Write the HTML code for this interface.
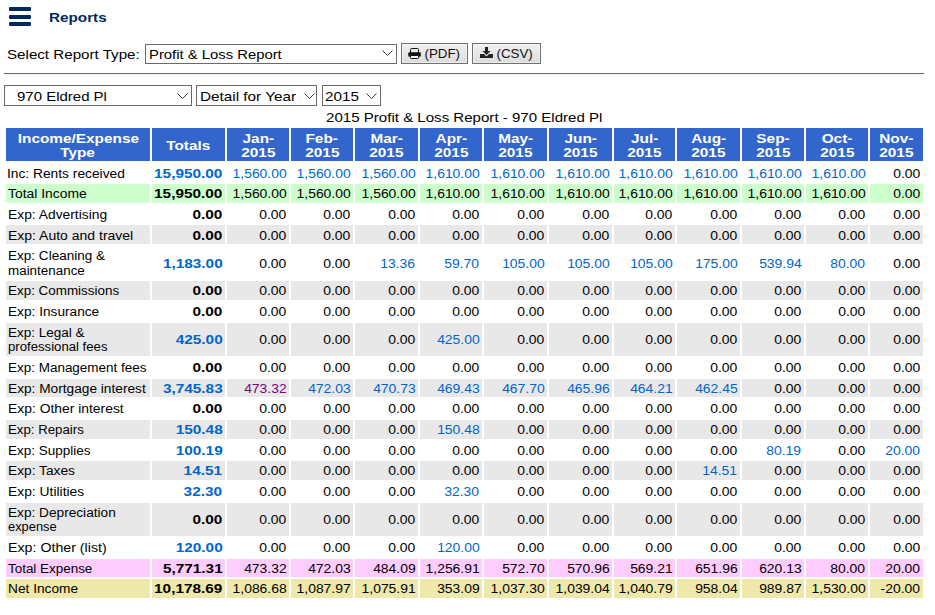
<!DOCTYPE html>
<html><head><meta charset="utf-8"><style>
html,body{margin:0;padding:0;background:#fff;width:935px;height:615px;overflow:hidden;position:relative}
*{box-sizing:border-box}
body{font-family:"Liberation Sans",sans-serif;color:#000}
.a{position:absolute}
.c{position:absolute;overflow:visible}
.t{position:absolute;white-space:nowrap;font-size:12px;line-height:14.667px}
.r{right:2.5px;transform-origin:100% 50%}
.l{left:1.5px;transform-origin:0 50%}
.n{display:inline-block;transform:scaleX(1.16);transform-origin:100% 0}
.b{display:inline-block;font-weight:bold;transform:scaleX(1.28);transform-origin:100% 0}
.h{background:#3366cc}
.ht{position:absolute;left:0;right:0;text-align:center;color:#fff;font-weight:bold;font-size:12px;line-height:14.667px;white-space:nowrap}
.ht span{display:inline-block;transform:scaleX(1.28);transform-origin:50% 50%}
.sel{position:absolute;border:1px solid #6a6a6a;background:#fff}
.chev{position:absolute}
.btn{position:absolute;border:1px solid #707070;box-shadow:inset 0 0 0 1px rgba(255,255,255,.45);background:linear-gradient(#f0f0f0,#dcdcdc);font-size:13px;line-height:19px;color:#222}
</style></head><body>

<div class="a" style="left:9px;top:7px;width:22px;height:4px;background:#002a5c;border-radius:1px"></div>
<div class="a" style="left:9px;top:15px;width:22px;height:4px;background:#002a5c;border-radius:1px"></div>
<div class="a" style="left:9px;top:22px;width:22px;height:4px;background:#002a5c;border-radius:1px"></div>
<div class="a" style="left:49px;top:10px;font-size:13px;line-height:16px;font-weight:bold;color:#002a5c;transform:scaleX(1.174);transform-origin:0 50%;white-space:nowrap">Reports</div>
<div class="a" style="left:7px;top:47px;font-size:13.33px;line-height:16px;white-space:nowrap;transform:scaleX(1.136);transform-origin:0 50%">Select Report Type:</div>
<div class="sel" style="left:145px;top:44px;width:252px;height:20px"></div>
<div class="a" style="left:149px;top:47px;font-size:13.33px;line-height:16px;white-space:nowrap;transform:scaleX(1.113);transform-origin:0 50%">Profit &amp; Loss Report</div>
<svg class="chev" style="left:381.5px;top:50px" width="12" height="7" viewBox="0 0 12 7"><path d="M0.5 0.5 L5.5 5.5 L10.5 0.5" fill="none" stroke="#3a3a3a" stroke-width="1"/></svg>
<div class="btn" style="left:401px;top:43px;width:67px;height:21px"></div>
<svg class="a" style="left:408px;top:48px" width="13" height="11" viewBox="0 0 13 11"><rect x="2.5" y="0.5" width="8" height="5" rx="1" fill="#e6e6e6" stroke="#111"/><rect x="0.3" y="4.2" width="12.5" height="4.6" rx="1" fill="#111"/><rect x="2.5" y="7.5" width="8" height="3" rx="0.8" fill="#f4f4f4" stroke="#111"/></svg>
<div class="a" style="left:424.5px;top:45.5px;font-size:13.33px;line-height:16px;color:#111;white-space:nowrap">(PDF)</div>
<div class="btn" style="left:472px;top:43px;width:69px;height:21px"></div>
<svg class="a" style="left:480px;top:47px" width="13" height="11" viewBox="0 0 13 11"><path d="M5 0h3v4h2.5l-4 4l-4-4h2.5z" fill="#222"/><path d="M0 7h4l2.5 2.5l2.5-2.5h4v4h-13z" fill="#222"/></svg>
<div class="a" style="left:496.5px;top:45.5px;font-size:13.33px;line-height:16px;color:#111;white-space:nowrap">(CSV)</div>
<div class="a" style="left:4px;top:73px;width:920px;height:1px;background:#6e6e6e"></div>
<div class="a" style="left:4px;top:74px;width:920px;height:1px;background:#f0f0f0"></div>
<div class="sel" style="left:4px;top:85px;width:188px;height:21px"></div>
<div class="a" style="left:17px;top:89px;font-size:13.33px;line-height:16px;white-space:nowrap;transform:scaleX(1.124);transform-origin:0 50%">970 Eldred Pl</div>
<svg class="chev" style="left:176.5px;top:92.5px" width="12" height="7" viewBox="0 0 12 7"><path d="M0.5 0.5 L5.5 5.5 L10.5 0.5" fill="none" stroke="#3a3a3a" stroke-width="1"/></svg>
<div class="sel" style="left:196px;top:85px;width:121px;height:21px"></div>
<div class="a" style="left:200px;top:89px;font-size:13.33px;line-height:16px;white-space:nowrap;transform:scaleX(1.147);transform-origin:0 50%">Detail for Year</div>
<svg class="chev" style="left:303.5px;top:92.5px" width="12" height="7" viewBox="0 0 12 7"><path d="M0.5 0.5 L5.5 5.5 L10.5 0.5" fill="none" stroke="#3a3a3a" stroke-width="1"/></svg>
<div class="sel" style="left:322px;top:85px;width:59px;height:21px"></div>
<div class="a" style="left:325px;top:89px;font-size:13.33px;line-height:16px;white-space:nowrap;transform:scaleX(1.142);transform-origin:0 50%">2015</div>
<svg class="chev" style="left:365.5px;top:92.5px" width="12" height="7" viewBox="0 0 12 7"><path d="M0.5 0.5 L5.5 5.5 L10.5 0.5" fill="none" stroke="#3a3a3a" stroke-width="1"/></svg>
<div class="a" style="left:0;width:929px;top:110px;text-align:center;font-size:13.33px;line-height:16px;white-space:nowrap"><span style="display:inline-block;transform:scaleX(1.13)">2015 Profit &amp; Loss Report - 970 Eldred Pl</span></div>
<div class="c h" style="left:6px;top:128.0px;width:144px;height:33.333px">
<div class="ht" style="top:4px"><span>Income/Expense</span></div><div class="ht" style="top:17.667px"><span>Type</span></div>
</div>
<div class="c h" style="left:152px;top:128.0px;width:73px;height:33.333px">
<div class="ht" style="top:10.667px"><span>Totals</span></div>
</div>
<div class="c h" style="left:227px;top:128.0px;width:62px;height:33.333px">
<div class="ht" style="top:4px"><span>Jan-</span></div><div class="ht" style="top:17.667px"><span>2015</span></div>
</div>
<div class="c h" style="left:291px;top:128.0px;width:62px;height:33.333px">
<div class="ht" style="top:4px"><span>Feb-</span></div><div class="ht" style="top:17.667px"><span>2015</span></div>
</div>
<div class="c h" style="left:355px;top:128.0px;width:63px;height:33.333px">
<div class="ht" style="top:4px"><span>Mar-</span></div><div class="ht" style="top:17.667px"><span>2015</span></div>
</div>
<div class="c h" style="left:420px;top:128.0px;width:62px;height:33.333px">
<div class="ht" style="top:4px"><span>Apr-</span></div><div class="ht" style="top:17.667px"><span>2015</span></div>
</div>
<div class="c h" style="left:484px;top:128.0px;width:63px;height:33.333px">
<div class="ht" style="top:4px"><span>May-</span></div><div class="ht" style="top:17.667px"><span>2015</span></div>
</div>
<div class="c h" style="left:549px;top:128.0px;width:63px;height:33.333px">
<div class="ht" style="top:4px"><span>Jun-</span></div><div class="ht" style="top:17.667px"><span>2015</span></div>
</div>
<div class="c h" style="left:614px;top:128.0px;width:61px;height:33.333px">
<div class="ht" style="top:4px"><span>Jul-</span></div><div class="ht" style="top:17.667px"><span>2015</span></div>
</div>
<div class="c h" style="left:677px;top:128.0px;width:63px;height:33.333px">
<div class="ht" style="top:4px"><span>Aug-</span></div><div class="ht" style="top:17.667px"><span>2015</span></div>
</div>
<div class="c h" style="left:742px;top:128.0px;width:62px;height:33.333px">
<div class="ht" style="top:4px"><span>Sep-</span></div><div class="ht" style="top:17.667px"><span>2015</span></div>
</div>
<div class="c h" style="left:806px;top:128.0px;width:62px;height:33.333px">
<div class="ht" style="top:4px"><span>Oct-</span></div><div class="ht" style="top:17.667px"><span>2015</span></div>
</div>
<div class="c h" style="left:870px;top:128.0px;width:53px;height:33.333px">
<div class="ht" style="top:4px"><span>Nov-</span></div><div class="ht" style="top:17.667px"><span>2015</span></div>
</div>
<div class="c" style="left:6px;top:163.333px;width:144px;height:18.667px"></div>
<div class="c" style="left:152px;top:163.333px;width:73px;height:18.667px"></div>
<div class="c" style="left:227px;top:163.333px;width:62px;height:18.667px"></div>
<div class="c" style="left:291px;top:163.333px;width:62px;height:18.667px"></div>
<div class="c" style="left:355px;top:163.333px;width:63px;height:18.667px"></div>
<div class="c" style="left:420px;top:163.333px;width:62px;height:18.667px"></div>
<div class="c" style="left:484px;top:163.333px;width:63px;height:18.667px"></div>
<div class="c" style="left:549px;top:163.333px;width:63px;height:18.667px"></div>
<div class="c" style="left:614px;top:163.333px;width:61px;height:18.667px"></div>
<div class="c" style="left:677px;top:163.333px;width:63px;height:18.667px"></div>
<div class="c" style="left:742px;top:163.333px;width:62px;height:18.667px"></div>
<div class="c" style="left:806px;top:163.333px;width:62px;height:18.667px"></div>
<div class="c" style="left:870px;top:163.333px;width:53px;height:18.667px"></div>
<div class="c" style="left:6px;top:184.000px;width:144px;height:18.667px;background:#ccffcc"></div>
<div class="c" style="left:152px;top:184.000px;width:73px;height:18.667px;background:#ccffcc"></div>
<div class="c" style="left:227px;top:184.000px;width:62px;height:18.667px;background:#ccffcc"></div>
<div class="c" style="left:291px;top:184.000px;width:62px;height:18.667px;background:#ccffcc"></div>
<div class="c" style="left:355px;top:184.000px;width:63px;height:18.667px;background:#ccffcc"></div>
<div class="c" style="left:420px;top:184.000px;width:62px;height:18.667px;background:#ccffcc"></div>
<div class="c" style="left:484px;top:184.000px;width:63px;height:18.667px;background:#ccffcc"></div>
<div class="c" style="left:549px;top:184.000px;width:63px;height:18.667px;background:#ccffcc"></div>
<div class="c" style="left:614px;top:184.000px;width:61px;height:18.667px;background:#ccffcc"></div>
<div class="c" style="left:677px;top:184.000px;width:63px;height:18.667px;background:#ccffcc"></div>
<div class="c" style="left:742px;top:184.000px;width:62px;height:18.667px;background:#ccffcc"></div>
<div class="c" style="left:806px;top:184.000px;width:62px;height:18.667px;background:#ccffcc"></div>
<div class="c" style="left:870px;top:184.000px;width:53px;height:18.667px;background:#ccffcc"></div>
<div class="c" style="left:6px;top:204.667px;width:144px;height:18.667px"></div>
<div class="c" style="left:152px;top:204.667px;width:73px;height:18.667px"></div>
<div class="c" style="left:227px;top:204.667px;width:62px;height:18.667px"></div>
<div class="c" style="left:291px;top:204.667px;width:62px;height:18.667px"></div>
<div class="c" style="left:355px;top:204.667px;width:63px;height:18.667px"></div>
<div class="c" style="left:420px;top:204.667px;width:62px;height:18.667px"></div>
<div class="c" style="left:484px;top:204.667px;width:63px;height:18.667px"></div>
<div class="c" style="left:549px;top:204.667px;width:63px;height:18.667px"></div>
<div class="c" style="left:614px;top:204.667px;width:61px;height:18.667px"></div>
<div class="c" style="left:677px;top:204.667px;width:63px;height:18.667px"></div>
<div class="c" style="left:742px;top:204.667px;width:62px;height:18.667px"></div>
<div class="c" style="left:806px;top:204.667px;width:62px;height:18.667px"></div>
<div class="c" style="left:870px;top:204.667px;width:53px;height:18.667px"></div>
<div class="c" style="left:6px;top:225.334px;width:144px;height:18.667px;background:#e8e8e8"></div>
<div class="c" style="left:152px;top:225.334px;width:73px;height:18.667px;background:#e8e8e8"></div>
<div class="c" style="left:227px;top:225.334px;width:62px;height:18.667px;background:#e8e8e8"></div>
<div class="c" style="left:291px;top:225.334px;width:62px;height:18.667px;background:#e8e8e8"></div>
<div class="c" style="left:355px;top:225.334px;width:63px;height:18.667px;background:#e8e8e8"></div>
<div class="c" style="left:420px;top:225.334px;width:62px;height:18.667px;background:#e8e8e8"></div>
<div class="c" style="left:484px;top:225.334px;width:63px;height:18.667px;background:#e8e8e8"></div>
<div class="c" style="left:549px;top:225.334px;width:63px;height:18.667px;background:#e8e8e8"></div>
<div class="c" style="left:614px;top:225.334px;width:61px;height:18.667px;background:#e8e8e8"></div>
<div class="c" style="left:677px;top:225.334px;width:63px;height:18.667px;background:#e8e8e8"></div>
<div class="c" style="left:742px;top:225.334px;width:62px;height:18.667px;background:#e8e8e8"></div>
<div class="c" style="left:806px;top:225.334px;width:62px;height:18.667px;background:#e8e8e8"></div>
<div class="c" style="left:870px;top:225.334px;width:53px;height:18.667px;background:#e8e8e8"></div>
<div class="c" style="left:6px;top:246.001px;width:144px;height:33.333px"></div>
<div class="c" style="left:152px;top:246.001px;width:73px;height:33.333px"></div>
<div class="c" style="left:227px;top:246.001px;width:62px;height:33.333px"></div>
<div class="c" style="left:291px;top:246.001px;width:62px;height:33.333px"></div>
<div class="c" style="left:355px;top:246.001px;width:63px;height:33.333px"></div>
<div class="c" style="left:420px;top:246.001px;width:62px;height:33.333px"></div>
<div class="c" style="left:484px;top:246.001px;width:63px;height:33.333px"></div>
<div class="c" style="left:549px;top:246.001px;width:63px;height:33.333px"></div>
<div class="c" style="left:614px;top:246.001px;width:61px;height:33.333px"></div>
<div class="c" style="left:677px;top:246.001px;width:63px;height:33.333px"></div>
<div class="c" style="left:742px;top:246.001px;width:62px;height:33.333px"></div>
<div class="c" style="left:806px;top:246.001px;width:62px;height:33.333px"></div>
<div class="c" style="left:870px;top:246.001px;width:53px;height:33.333px"></div>
<div class="c" style="left:6px;top:281.334px;width:144px;height:18.667px;background:#e8e8e8"></div>
<div class="c" style="left:152px;top:281.334px;width:73px;height:18.667px;background:#e8e8e8"></div>
<div class="c" style="left:227px;top:281.334px;width:62px;height:18.667px;background:#e8e8e8"></div>
<div class="c" style="left:291px;top:281.334px;width:62px;height:18.667px;background:#e8e8e8"></div>
<div class="c" style="left:355px;top:281.334px;width:63px;height:18.667px;background:#e8e8e8"></div>
<div class="c" style="left:420px;top:281.334px;width:62px;height:18.667px;background:#e8e8e8"></div>
<div class="c" style="left:484px;top:281.334px;width:63px;height:18.667px;background:#e8e8e8"></div>
<div class="c" style="left:549px;top:281.334px;width:63px;height:18.667px;background:#e8e8e8"></div>
<div class="c" style="left:614px;top:281.334px;width:61px;height:18.667px;background:#e8e8e8"></div>
<div class="c" style="left:677px;top:281.334px;width:63px;height:18.667px;background:#e8e8e8"></div>
<div class="c" style="left:742px;top:281.334px;width:62px;height:18.667px;background:#e8e8e8"></div>
<div class="c" style="left:806px;top:281.334px;width:62px;height:18.667px;background:#e8e8e8"></div>
<div class="c" style="left:870px;top:281.334px;width:53px;height:18.667px;background:#e8e8e8"></div>
<div class="c" style="left:6px;top:302.001px;width:144px;height:18.667px"></div>
<div class="c" style="left:152px;top:302.001px;width:73px;height:18.667px"></div>
<div class="c" style="left:227px;top:302.001px;width:62px;height:18.667px"></div>
<div class="c" style="left:291px;top:302.001px;width:62px;height:18.667px"></div>
<div class="c" style="left:355px;top:302.001px;width:63px;height:18.667px"></div>
<div class="c" style="left:420px;top:302.001px;width:62px;height:18.667px"></div>
<div class="c" style="left:484px;top:302.001px;width:63px;height:18.667px"></div>
<div class="c" style="left:549px;top:302.001px;width:63px;height:18.667px"></div>
<div class="c" style="left:614px;top:302.001px;width:61px;height:18.667px"></div>
<div class="c" style="left:677px;top:302.001px;width:63px;height:18.667px"></div>
<div class="c" style="left:742px;top:302.001px;width:62px;height:18.667px"></div>
<div class="c" style="left:806px;top:302.001px;width:62px;height:18.667px"></div>
<div class="c" style="left:870px;top:302.001px;width:53px;height:18.667px"></div>
<div class="c" style="left:6px;top:322.668px;width:144px;height:33.333px;background:#e8e8e8"></div>
<div class="c" style="left:152px;top:322.668px;width:73px;height:33.333px;background:#e8e8e8"></div>
<div class="c" style="left:227px;top:322.668px;width:62px;height:33.333px;background:#e8e8e8"></div>
<div class="c" style="left:291px;top:322.668px;width:62px;height:33.333px;background:#e8e8e8"></div>
<div class="c" style="left:355px;top:322.668px;width:63px;height:33.333px;background:#e8e8e8"></div>
<div class="c" style="left:420px;top:322.668px;width:62px;height:33.333px;background:#e8e8e8"></div>
<div class="c" style="left:484px;top:322.668px;width:63px;height:33.333px;background:#e8e8e8"></div>
<div class="c" style="left:549px;top:322.668px;width:63px;height:33.333px;background:#e8e8e8"></div>
<div class="c" style="left:614px;top:322.668px;width:61px;height:33.333px;background:#e8e8e8"></div>
<div class="c" style="left:677px;top:322.668px;width:63px;height:33.333px;background:#e8e8e8"></div>
<div class="c" style="left:742px;top:322.668px;width:62px;height:33.333px;background:#e8e8e8"></div>
<div class="c" style="left:806px;top:322.668px;width:62px;height:33.333px;background:#e8e8e8"></div>
<div class="c" style="left:870px;top:322.668px;width:53px;height:33.333px;background:#e8e8e8"></div>
<div class="c" style="left:6px;top:358.001px;width:144px;height:18.667px"></div>
<div class="c" style="left:152px;top:358.001px;width:73px;height:18.667px"></div>
<div class="c" style="left:227px;top:358.001px;width:62px;height:18.667px"></div>
<div class="c" style="left:291px;top:358.001px;width:62px;height:18.667px"></div>
<div class="c" style="left:355px;top:358.001px;width:63px;height:18.667px"></div>
<div class="c" style="left:420px;top:358.001px;width:62px;height:18.667px"></div>
<div class="c" style="left:484px;top:358.001px;width:63px;height:18.667px"></div>
<div class="c" style="left:549px;top:358.001px;width:63px;height:18.667px"></div>
<div class="c" style="left:614px;top:358.001px;width:61px;height:18.667px"></div>
<div class="c" style="left:677px;top:358.001px;width:63px;height:18.667px"></div>
<div class="c" style="left:742px;top:358.001px;width:62px;height:18.667px"></div>
<div class="c" style="left:806px;top:358.001px;width:62px;height:18.667px"></div>
<div class="c" style="left:870px;top:358.001px;width:53px;height:18.667px"></div>
<div class="c" style="left:6px;top:378.668px;width:144px;height:18.667px;background:#e8e8e8"></div>
<div class="c" style="left:152px;top:378.668px;width:73px;height:18.667px;background:#e8e8e8"></div>
<div class="c" style="left:227px;top:378.668px;width:62px;height:18.667px;background:#e8e8e8"></div>
<div class="c" style="left:291px;top:378.668px;width:62px;height:18.667px;background:#e8e8e8"></div>
<div class="c" style="left:355px;top:378.668px;width:63px;height:18.667px;background:#e8e8e8"></div>
<div class="c" style="left:420px;top:378.668px;width:62px;height:18.667px;background:#e8e8e8"></div>
<div class="c" style="left:484px;top:378.668px;width:63px;height:18.667px;background:#e8e8e8"></div>
<div class="c" style="left:549px;top:378.668px;width:63px;height:18.667px;background:#e8e8e8"></div>
<div class="c" style="left:614px;top:378.668px;width:61px;height:18.667px;background:#e8e8e8"></div>
<div class="c" style="left:677px;top:378.668px;width:63px;height:18.667px;background:#e8e8e8"></div>
<div class="c" style="left:742px;top:378.668px;width:62px;height:18.667px;background:#e8e8e8"></div>
<div class="c" style="left:806px;top:378.668px;width:62px;height:18.667px;background:#e8e8e8"></div>
<div class="c" style="left:870px;top:378.668px;width:53px;height:18.667px;background:#e8e8e8"></div>
<div class="c" style="left:6px;top:399.335px;width:144px;height:18.667px"></div>
<div class="c" style="left:152px;top:399.335px;width:73px;height:18.667px"></div>
<div class="c" style="left:227px;top:399.335px;width:62px;height:18.667px"></div>
<div class="c" style="left:291px;top:399.335px;width:62px;height:18.667px"></div>
<div class="c" style="left:355px;top:399.335px;width:63px;height:18.667px"></div>
<div class="c" style="left:420px;top:399.335px;width:62px;height:18.667px"></div>
<div class="c" style="left:484px;top:399.335px;width:63px;height:18.667px"></div>
<div class="c" style="left:549px;top:399.335px;width:63px;height:18.667px"></div>
<div class="c" style="left:614px;top:399.335px;width:61px;height:18.667px"></div>
<div class="c" style="left:677px;top:399.335px;width:63px;height:18.667px"></div>
<div class="c" style="left:742px;top:399.335px;width:62px;height:18.667px"></div>
<div class="c" style="left:806px;top:399.335px;width:62px;height:18.667px"></div>
<div class="c" style="left:870px;top:399.335px;width:53px;height:18.667px"></div>
<div class="c" style="left:6px;top:420.002px;width:144px;height:18.667px;background:#e8e8e8"></div>
<div class="c" style="left:152px;top:420.002px;width:73px;height:18.667px;background:#e8e8e8"></div>
<div class="c" style="left:227px;top:420.002px;width:62px;height:18.667px;background:#e8e8e8"></div>
<div class="c" style="left:291px;top:420.002px;width:62px;height:18.667px;background:#e8e8e8"></div>
<div class="c" style="left:355px;top:420.002px;width:63px;height:18.667px;background:#e8e8e8"></div>
<div class="c" style="left:420px;top:420.002px;width:62px;height:18.667px;background:#e8e8e8"></div>
<div class="c" style="left:484px;top:420.002px;width:63px;height:18.667px;background:#e8e8e8"></div>
<div class="c" style="left:549px;top:420.002px;width:63px;height:18.667px;background:#e8e8e8"></div>
<div class="c" style="left:614px;top:420.002px;width:61px;height:18.667px;background:#e8e8e8"></div>
<div class="c" style="left:677px;top:420.002px;width:63px;height:18.667px;background:#e8e8e8"></div>
<div class="c" style="left:742px;top:420.002px;width:62px;height:18.667px;background:#e8e8e8"></div>
<div class="c" style="left:806px;top:420.002px;width:62px;height:18.667px;background:#e8e8e8"></div>
<div class="c" style="left:870px;top:420.002px;width:53px;height:18.667px;background:#e8e8e8"></div>
<div class="c" style="left:6px;top:440.669px;width:144px;height:18.667px"></div>
<div class="c" style="left:152px;top:440.669px;width:73px;height:18.667px"></div>
<div class="c" style="left:227px;top:440.669px;width:62px;height:18.667px"></div>
<div class="c" style="left:291px;top:440.669px;width:62px;height:18.667px"></div>
<div class="c" style="left:355px;top:440.669px;width:63px;height:18.667px"></div>
<div class="c" style="left:420px;top:440.669px;width:62px;height:18.667px"></div>
<div class="c" style="left:484px;top:440.669px;width:63px;height:18.667px"></div>
<div class="c" style="left:549px;top:440.669px;width:63px;height:18.667px"></div>
<div class="c" style="left:614px;top:440.669px;width:61px;height:18.667px"></div>
<div class="c" style="left:677px;top:440.669px;width:63px;height:18.667px"></div>
<div class="c" style="left:742px;top:440.669px;width:62px;height:18.667px"></div>
<div class="c" style="left:806px;top:440.669px;width:62px;height:18.667px"></div>
<div class="c" style="left:870px;top:440.669px;width:53px;height:18.667px"></div>
<div class="c" style="left:6px;top:461.336px;width:144px;height:18.667px;background:#e8e8e8"></div>
<div class="c" style="left:152px;top:461.336px;width:73px;height:18.667px;background:#e8e8e8"></div>
<div class="c" style="left:227px;top:461.336px;width:62px;height:18.667px;background:#e8e8e8"></div>
<div class="c" style="left:291px;top:461.336px;width:62px;height:18.667px;background:#e8e8e8"></div>
<div class="c" style="left:355px;top:461.336px;width:63px;height:18.667px;background:#e8e8e8"></div>
<div class="c" style="left:420px;top:461.336px;width:62px;height:18.667px;background:#e8e8e8"></div>
<div class="c" style="left:484px;top:461.336px;width:63px;height:18.667px;background:#e8e8e8"></div>
<div class="c" style="left:549px;top:461.336px;width:63px;height:18.667px;background:#e8e8e8"></div>
<div class="c" style="left:614px;top:461.336px;width:61px;height:18.667px;background:#e8e8e8"></div>
<div class="c" style="left:677px;top:461.336px;width:63px;height:18.667px;background:#e8e8e8"></div>
<div class="c" style="left:742px;top:461.336px;width:62px;height:18.667px;background:#e8e8e8"></div>
<div class="c" style="left:806px;top:461.336px;width:62px;height:18.667px;background:#e8e8e8"></div>
<div class="c" style="left:870px;top:461.336px;width:53px;height:18.667px;background:#e8e8e8"></div>
<div class="c" style="left:6px;top:482.003px;width:144px;height:18.667px"></div>
<div class="c" style="left:152px;top:482.003px;width:73px;height:18.667px"></div>
<div class="c" style="left:227px;top:482.003px;width:62px;height:18.667px"></div>
<div class="c" style="left:291px;top:482.003px;width:62px;height:18.667px"></div>
<div class="c" style="left:355px;top:482.003px;width:63px;height:18.667px"></div>
<div class="c" style="left:420px;top:482.003px;width:62px;height:18.667px"></div>
<div class="c" style="left:484px;top:482.003px;width:63px;height:18.667px"></div>
<div class="c" style="left:549px;top:482.003px;width:63px;height:18.667px"></div>
<div class="c" style="left:614px;top:482.003px;width:61px;height:18.667px"></div>
<div class="c" style="left:677px;top:482.003px;width:63px;height:18.667px"></div>
<div class="c" style="left:742px;top:482.003px;width:62px;height:18.667px"></div>
<div class="c" style="left:806px;top:482.003px;width:62px;height:18.667px"></div>
<div class="c" style="left:870px;top:482.003px;width:53px;height:18.667px"></div>
<div class="c" style="left:6px;top:502.670px;width:144px;height:33.333px;background:#e8e8e8"></div>
<div class="c" style="left:152px;top:502.670px;width:73px;height:33.333px;background:#e8e8e8"></div>
<div class="c" style="left:227px;top:502.670px;width:62px;height:33.333px;background:#e8e8e8"></div>
<div class="c" style="left:291px;top:502.670px;width:62px;height:33.333px;background:#e8e8e8"></div>
<div class="c" style="left:355px;top:502.670px;width:63px;height:33.333px;background:#e8e8e8"></div>
<div class="c" style="left:420px;top:502.670px;width:62px;height:33.333px;background:#e8e8e8"></div>
<div class="c" style="left:484px;top:502.670px;width:63px;height:33.333px;background:#e8e8e8"></div>
<div class="c" style="left:549px;top:502.670px;width:63px;height:33.333px;background:#e8e8e8"></div>
<div class="c" style="left:614px;top:502.670px;width:61px;height:33.333px;background:#e8e8e8"></div>
<div class="c" style="left:677px;top:502.670px;width:63px;height:33.333px;background:#e8e8e8"></div>
<div class="c" style="left:742px;top:502.670px;width:62px;height:33.333px;background:#e8e8e8"></div>
<div class="c" style="left:806px;top:502.670px;width:62px;height:33.333px;background:#e8e8e8"></div>
<div class="c" style="left:870px;top:502.670px;width:53px;height:33.333px;background:#e8e8e8"></div>
<div class="c" style="left:6px;top:538.003px;width:144px;height:18.667px"></div>
<div class="c" style="left:152px;top:538.003px;width:73px;height:18.667px"></div>
<div class="c" style="left:227px;top:538.003px;width:62px;height:18.667px"></div>
<div class="c" style="left:291px;top:538.003px;width:62px;height:18.667px"></div>
<div class="c" style="left:355px;top:538.003px;width:63px;height:18.667px"></div>
<div class="c" style="left:420px;top:538.003px;width:62px;height:18.667px"></div>
<div class="c" style="left:484px;top:538.003px;width:63px;height:18.667px"></div>
<div class="c" style="left:549px;top:538.003px;width:63px;height:18.667px"></div>
<div class="c" style="left:614px;top:538.003px;width:61px;height:18.667px"></div>
<div class="c" style="left:677px;top:538.003px;width:63px;height:18.667px"></div>
<div class="c" style="left:742px;top:538.003px;width:62px;height:18.667px"></div>
<div class="c" style="left:806px;top:538.003px;width:62px;height:18.667px"></div>
<div class="c" style="left:870px;top:538.003px;width:53px;height:18.667px"></div>
<div class="c" style="left:6px;top:558.670px;width:144px;height:18.667px;background:#ffccff"></div>
<div class="c" style="left:152px;top:558.670px;width:73px;height:18.667px;background:#ffccff"></div>
<div class="c" style="left:227px;top:558.670px;width:62px;height:18.667px;background:#ffccff"></div>
<div class="c" style="left:291px;top:558.670px;width:62px;height:18.667px;background:#ffccff"></div>
<div class="c" style="left:355px;top:558.670px;width:63px;height:18.667px;background:#ffccff"></div>
<div class="c" style="left:420px;top:558.670px;width:62px;height:18.667px;background:#ffccff"></div>
<div class="c" style="left:484px;top:558.670px;width:63px;height:18.667px;background:#ffccff"></div>
<div class="c" style="left:549px;top:558.670px;width:63px;height:18.667px;background:#ffccff"></div>
<div class="c" style="left:614px;top:558.670px;width:61px;height:18.667px;background:#ffccff"></div>
<div class="c" style="left:677px;top:558.670px;width:63px;height:18.667px;background:#ffccff"></div>
<div class="c" style="left:742px;top:558.670px;width:62px;height:18.667px;background:#ffccff"></div>
<div class="c" style="left:806px;top:558.670px;width:62px;height:18.667px;background:#ffccff"></div>
<div class="c" style="left:870px;top:558.670px;width:53px;height:18.667px;background:#ffccff"></div>
<div class="c" style="left:6px;top:579.337px;width:144px;height:18.667px;background:#eee8aa"></div>
<div class="c" style="left:152px;top:579.337px;width:73px;height:18.667px;background:#eee8aa"></div>
<div class="c" style="left:227px;top:579.337px;width:62px;height:18.667px;background:#eee8aa"></div>
<div class="c" style="left:291px;top:579.337px;width:62px;height:18.667px;background:#eee8aa"></div>
<div class="c" style="left:355px;top:579.337px;width:63px;height:18.667px;background:#eee8aa"></div>
<div class="c" style="left:420px;top:579.337px;width:62px;height:18.667px;background:#eee8aa"></div>
<div class="c" style="left:484px;top:579.337px;width:63px;height:18.667px;background:#eee8aa"></div>
<div class="c" style="left:549px;top:579.337px;width:63px;height:18.667px;background:#eee8aa"></div>
<div class="c" style="left:614px;top:579.337px;width:61px;height:18.667px;background:#eee8aa"></div>
<div class="c" style="left:677px;top:579.337px;width:63px;height:18.667px;background:#eee8aa"></div>
<div class="c" style="left:742px;top:579.337px;width:62px;height:18.667px;background:#eee8aa"></div>
<div class="c" style="left:806px;top:579.337px;width:62px;height:18.667px;background:#eee8aa"></div>
<div class="c" style="left:870px;top:579.337px;width:53px;height:18.667px;background:#eee8aa"></div>
<div class="t" style="left:7.352px;top:167px;transform:scaleX(1.1475);transform-origin:0 0">Inc: Rents received</div>
<div class="t" style="left:152px;top:167px;width:70.5px;text-align:right;color:#0066cc"><span class="b">15,950.00</span></div>
<div class="t" style="left:227px;top:167px;width:59.5px;text-align:right;color:#0066cc"><span class="n">1,560.00</span></div>
<div class="t" style="left:291px;top:167px;width:59.5px;text-align:right;color:#0066cc"><span class="n">1,560.00</span></div>
<div class="t" style="left:355px;top:167px;width:60.5px;text-align:right;color:#0066cc"><span class="n">1,560.00</span></div>
<div class="t" style="left:420px;top:167px;width:59.5px;text-align:right;color:#0066cc"><span class="n">1,610.00</span></div>
<div class="t" style="left:484px;top:167px;width:60.5px;text-align:right;color:#0066cc"><span class="n">1,610.00</span></div>
<div class="t" style="left:549px;top:167px;width:60.5px;text-align:right;color:#0066cc"><span class="n">1,610.00</span></div>
<div class="t" style="left:614px;top:167px;width:58.5px;text-align:right;color:#0066cc"><span class="n">1,610.00</span></div>
<div class="t" style="left:677px;top:167px;width:60.5px;text-align:right;color:#0066cc"><span class="n">1,610.00</span></div>
<div class="t" style="left:742px;top:167px;width:59.5px;text-align:right;color:#0066cc"><span class="n">1,610.00</span></div>
<div class="t" style="left:806px;top:167px;width:59.5px;text-align:right;color:#0066cc"><span class="n">1,610.00</span></div>
<div class="t" style="left:870px;top:167px;width:50.5px;text-align:right;color:#000000"><span class="n">0.00</span></div>
<div class="t" style="left:7.7px;top:187px;transform:scaleX(1.1574);transform-origin:0 0">Total Income</div>
<div class="t" style="left:152px;top:187px;width:70.5px;text-align:right;color:#000000"><span class="b">15,950.00</span></div>
<div class="t" style="left:227px;top:187px;width:59.5px;text-align:right;color:#000000"><span class="n">1,560.00</span></div>
<div class="t" style="left:291px;top:187px;width:59.5px;text-align:right;color:#000000"><span class="n">1,560.00</span></div>
<div class="t" style="left:355px;top:187px;width:60.5px;text-align:right;color:#000000"><span class="n">1,560.00</span></div>
<div class="t" style="left:420px;top:187px;width:59.5px;text-align:right;color:#000000"><span class="n">1,610.00</span></div>
<div class="t" style="left:484px;top:187px;width:60.5px;text-align:right;color:#000000"><span class="n">1,610.00</span></div>
<div class="t" style="left:549px;top:187px;width:60.5px;text-align:right;color:#000000"><span class="n">1,610.00</span></div>
<div class="t" style="left:614px;top:187px;width:58.5px;text-align:right;color:#000000"><span class="n">1,610.00</span></div>
<div class="t" style="left:677px;top:187px;width:60.5px;text-align:right;color:#000000"><span class="n">1,610.00</span></div>
<div class="t" style="left:742px;top:187px;width:59.5px;text-align:right;color:#000000"><span class="n">1,610.00</span></div>
<div class="t" style="left:806px;top:187px;width:59.5px;text-align:right;color:#000000"><span class="n">1,610.00</span></div>
<div class="t" style="left:870px;top:187px;width:50.5px;text-align:right;color:#000000"><span class="n">0.00</span></div>
<div class="t" style="left:7.848px;top:208px;transform:scaleX(1.1518);transform-origin:0 0">Exp: Advertising</div>
<div class="t" style="left:152px;top:208px;width:70.5px;text-align:right;color:#000000"><span class="b">0.00</span></div>
<div class="t" style="left:227px;top:208px;width:59.5px;text-align:right;color:#000000"><span class="n">0.00</span></div>
<div class="t" style="left:291px;top:208px;width:59.5px;text-align:right;color:#000000"><span class="n">0.00</span></div>
<div class="t" style="left:355px;top:208px;width:60.5px;text-align:right;color:#000000"><span class="n">0.00</span></div>
<div class="t" style="left:420px;top:208px;width:59.5px;text-align:right;color:#000000"><span class="n">0.00</span></div>
<div class="t" style="left:484px;top:208px;width:60.5px;text-align:right;color:#000000"><span class="n">0.00</span></div>
<div class="t" style="left:549px;top:208px;width:60.5px;text-align:right;color:#000000"><span class="n">0.00</span></div>
<div class="t" style="left:614px;top:208px;width:58.5px;text-align:right;color:#000000"><span class="n">0.00</span></div>
<div class="t" style="left:677px;top:208px;width:60.5px;text-align:right;color:#000000"><span class="n">0.00</span></div>
<div class="t" style="left:742px;top:208px;width:59.5px;text-align:right;color:#000000"><span class="n">0.00</span></div>
<div class="t" style="left:806px;top:208px;width:59.5px;text-align:right;color:#000000"><span class="n">0.00</span></div>
<div class="t" style="left:870px;top:208px;width:50.5px;text-align:right;color:#000000"><span class="n">0.00</span></div>
<div class="t" style="left:7.834px;top:229px;transform:scaleX(1.166);transform-origin:0 0">Exp: Auto and travel</div>
<div class="t" style="left:152px;top:229px;width:70.5px;text-align:right;color:#000000"><span class="b">0.00</span></div>
<div class="t" style="left:227px;top:229px;width:59.5px;text-align:right;color:#000000"><span class="n">0.00</span></div>
<div class="t" style="left:291px;top:229px;width:59.5px;text-align:right;color:#000000"><span class="n">0.00</span></div>
<div class="t" style="left:355px;top:229px;width:60.5px;text-align:right;color:#000000"><span class="n">0.00</span></div>
<div class="t" style="left:420px;top:229px;width:59.5px;text-align:right;color:#000000"><span class="n">0.00</span></div>
<div class="t" style="left:484px;top:229px;width:60.5px;text-align:right;color:#000000"><span class="n">0.00</span></div>
<div class="t" style="left:549px;top:229px;width:60.5px;text-align:right;color:#000000"><span class="n">0.00</span></div>
<div class="t" style="left:614px;top:229px;width:58.5px;text-align:right;color:#000000"><span class="n">0.00</span></div>
<div class="t" style="left:677px;top:229px;width:60.5px;text-align:right;color:#000000"><span class="n">0.00</span></div>
<div class="t" style="left:742px;top:229px;width:59.5px;text-align:right;color:#000000"><span class="n">0.00</span></div>
<div class="t" style="left:806px;top:229px;width:59.5px;text-align:right;color:#000000"><span class="n">0.00</span></div>
<div class="t" style="left:870px;top:229px;width:50.5px;text-align:right;color:#000000"><span class="n">0.00</span></div>
<div class="t" style="left:7.872px;top:249px;transform:scaleX(1.1282);transform-origin:0 0">Exp: Cleaning &amp;</div>
<div class="t" style="left:7.882px;top:264px;transform:scaleX(1.1176);transform-origin:0 0">maintenance</div>
<div class="t" style="left:152px;top:257px;width:70.5px;text-align:right;color:#0066cc"><span class="b">1,183.00</span></div>
<div class="t" style="left:227px;top:257px;width:59.5px;text-align:right;color:#000000"><span class="n">0.00</span></div>
<div class="t" style="left:291px;top:257px;width:59.5px;text-align:right;color:#000000"><span class="n">0.00</span></div>
<div class="t" style="left:355px;top:257px;width:60.5px;text-align:right;color:#0066cc"><span class="n">13.36</span></div>
<div class="t" style="left:420px;top:257px;width:59.5px;text-align:right;color:#0066cc"><span class="n">59.70</span></div>
<div class="t" style="left:484px;top:257px;width:60.5px;text-align:right;color:#0066cc"><span class="n">105.00</span></div>
<div class="t" style="left:549px;top:257px;width:60.5px;text-align:right;color:#0066cc"><span class="n">105.00</span></div>
<div class="t" style="left:614px;top:257px;width:58.5px;text-align:right;color:#0066cc"><span class="n">105.00</span></div>
<div class="t" style="left:677px;top:257px;width:60.5px;text-align:right;color:#0066cc"><span class="n">175.00</span></div>
<div class="t" style="left:742px;top:257px;width:59.5px;text-align:right;color:#0066cc"><span class="n">539.94</span></div>
<div class="t" style="left:806px;top:257px;width:59.5px;text-align:right;color:#0066cc"><span class="n">80.00</span></div>
<div class="t" style="left:870px;top:257px;width:50.5px;text-align:right;color:#000000"><span class="n">0.00</span></div>
<div class="t" style="left:7.882px;top:284px;transform:scaleX(1.1184);transform-origin:0 0">Exp: Commissions</div>
<div class="t" style="left:152px;top:284px;width:70.5px;text-align:right;color:#000000"><span class="b">0.00</span></div>
<div class="t" style="left:227px;top:284px;width:59.5px;text-align:right;color:#000000"><span class="n">0.00</span></div>
<div class="t" style="left:291px;top:284px;width:59.5px;text-align:right;color:#000000"><span class="n">0.00</span></div>
<div class="t" style="left:355px;top:284px;width:60.5px;text-align:right;color:#000000"><span class="n">0.00</span></div>
<div class="t" style="left:420px;top:284px;width:59.5px;text-align:right;color:#000000"><span class="n">0.00</span></div>
<div class="t" style="left:484px;top:284px;width:60.5px;text-align:right;color:#000000"><span class="n">0.00</span></div>
<div class="t" style="left:549px;top:284px;width:60.5px;text-align:right;color:#000000"><span class="n">0.00</span></div>
<div class="t" style="left:614px;top:284px;width:58.5px;text-align:right;color:#000000"><span class="n">0.00</span></div>
<div class="t" style="left:677px;top:284px;width:60.5px;text-align:right;color:#000000"><span class="n">0.00</span></div>
<div class="t" style="left:742px;top:284px;width:59.5px;text-align:right;color:#000000"><span class="n">0.00</span></div>
<div class="t" style="left:806px;top:284px;width:59.5px;text-align:right;color:#000000"><span class="n">0.00</span></div>
<div class="t" style="left:870px;top:284px;width:50.5px;text-align:right;color:#000000"><span class="n">0.00</span></div>
<div class="t" style="left:7.861px;top:305px;transform:scaleX(1.1392);transform-origin:0 0">Exp: Insurance</div>
<div class="t" style="left:152px;top:305px;width:70.5px;text-align:right;color:#000000"><span class="b">0.00</span></div>
<div class="t" style="left:227px;top:305px;width:59.5px;text-align:right;color:#000000"><span class="n">0.00</span></div>
<div class="t" style="left:291px;top:305px;width:59.5px;text-align:right;color:#000000"><span class="n">0.00</span></div>
<div class="t" style="left:355px;top:305px;width:60.5px;text-align:right;color:#000000"><span class="n">0.00</span></div>
<div class="t" style="left:420px;top:305px;width:59.5px;text-align:right;color:#000000"><span class="n">0.00</span></div>
<div class="t" style="left:484px;top:305px;width:60.5px;text-align:right;color:#000000"><span class="n">0.00</span></div>
<div class="t" style="left:549px;top:305px;width:60.5px;text-align:right;color:#000000"><span class="n">0.00</span></div>
<div class="t" style="left:614px;top:305px;width:58.5px;text-align:right;color:#000000"><span class="n">0.00</span></div>
<div class="t" style="left:677px;top:305px;width:60.5px;text-align:right;color:#000000"><span class="n">0.00</span></div>
<div class="t" style="left:742px;top:305px;width:59.5px;text-align:right;color:#000000"><span class="n">0.00</span></div>
<div class="t" style="left:806px;top:305px;width:59.5px;text-align:right;color:#000000"><span class="n">0.00</span></div>
<div class="t" style="left:870px;top:305px;width:50.5px;text-align:right;color:#000000"><span class="n">0.00</span></div>
<div class="t" style="left:7.875px;top:326px;transform:scaleX(1.1254);transform-origin:0 0">Exp: Legal &amp;</div>
<div class="t" style="left:8.4px;top:340px;transform:scaleX(1.0967);transform-origin:0 0">professional fees</div>
<div class="t" style="left:152px;top:333px;width:70.5px;text-align:right;color:#0066cc"><span class="b">425.00</span></div>
<div class="t" style="left:227px;top:333px;width:59.5px;text-align:right;color:#000000"><span class="n">0.00</span></div>
<div class="t" style="left:291px;top:333px;width:59.5px;text-align:right;color:#000000"><span class="n">0.00</span></div>
<div class="t" style="left:355px;top:333px;width:60.5px;text-align:right;color:#000000"><span class="n">0.00</span></div>
<div class="t" style="left:420px;top:333px;width:59.5px;text-align:right;color:#0066cc"><span class="n">425.00</span></div>
<div class="t" style="left:484px;top:333px;width:60.5px;text-align:right;color:#000000"><span class="n">0.00</span></div>
<div class="t" style="left:549px;top:333px;width:60.5px;text-align:right;color:#000000"><span class="n">0.00</span></div>
<div class="t" style="left:614px;top:333px;width:58.5px;text-align:right;color:#000000"><span class="n">0.00</span></div>
<div class="t" style="left:677px;top:333px;width:60.5px;text-align:right;color:#000000"><span class="n">0.00</span></div>
<div class="t" style="left:742px;top:333px;width:59.5px;text-align:right;color:#000000"><span class="n">0.00</span></div>
<div class="t" style="left:806px;top:333px;width:59.5px;text-align:right;color:#000000"><span class="n">0.00</span></div>
<div class="t" style="left:870px;top:333px;width:50.5px;text-align:right;color:#000000"><span class="n">0.00</span></div>
<div class="t" style="left:7.878px;top:361px;transform:scaleX(1.1221);transform-origin:0 0">Exp: Management fees</div>
<div class="t" style="left:152px;top:361px;width:70.5px;text-align:right;color:#000000"><span class="b">0.00</span></div>
<div class="t" style="left:227px;top:361px;width:59.5px;text-align:right;color:#000000"><span class="n">0.00</span></div>
<div class="t" style="left:291px;top:361px;width:59.5px;text-align:right;color:#000000"><span class="n">0.00</span></div>
<div class="t" style="left:355px;top:361px;width:60.5px;text-align:right;color:#000000"><span class="n">0.00</span></div>
<div class="t" style="left:420px;top:361px;width:59.5px;text-align:right;color:#000000"><span class="n">0.00</span></div>
<div class="t" style="left:484px;top:361px;width:60.5px;text-align:right;color:#000000"><span class="n">0.00</span></div>
<div class="t" style="left:549px;top:361px;width:60.5px;text-align:right;color:#000000"><span class="n">0.00</span></div>
<div class="t" style="left:614px;top:361px;width:58.5px;text-align:right;color:#000000"><span class="n">0.00</span></div>
<div class="t" style="left:677px;top:361px;width:60.5px;text-align:right;color:#000000"><span class="n">0.00</span></div>
<div class="t" style="left:742px;top:361px;width:59.5px;text-align:right;color:#000000"><span class="n">0.00</span></div>
<div class="t" style="left:806px;top:361px;width:59.5px;text-align:right;color:#000000"><span class="n">0.00</span></div>
<div class="t" style="left:870px;top:361px;width:50.5px;text-align:right;color:#000000"><span class="n">0.00</span></div>
<div class="t" style="left:7.859px;top:382px;transform:scaleX(1.1408);transform-origin:0 0">Exp: Mortgage interest</div>
<div class="t" style="left:152px;top:382px;width:70.5px;text-align:right;color:#0066cc"><span class="b">3,745.83</span></div>
<div class="t" style="left:227px;top:382px;width:59.5px;text-align:right;color:#800080"><span class="n">473.32</span></div>
<div class="t" style="left:291px;top:382px;width:59.5px;text-align:right;color:#0066cc"><span class="n">472.03</span></div>
<div class="t" style="left:355px;top:382px;width:60.5px;text-align:right;color:#0066cc"><span class="n">470.73</span></div>
<div class="t" style="left:420px;top:382px;width:59.5px;text-align:right;color:#0066cc"><span class="n">469.43</span></div>
<div class="t" style="left:484px;top:382px;width:60.5px;text-align:right;color:#0066cc"><span class="n">467.70</span></div>
<div class="t" style="left:549px;top:382px;width:60.5px;text-align:right;color:#0066cc"><span class="n">465.96</span></div>
<div class="t" style="left:614px;top:382px;width:58.5px;text-align:right;color:#0066cc"><span class="n">464.21</span></div>
<div class="t" style="left:677px;top:382px;width:60.5px;text-align:right;color:#0066cc"><span class="n">462.45</span></div>
<div class="t" style="left:742px;top:382px;width:59.5px;text-align:right;color:#000000"><span class="n">0.00</span></div>
<div class="t" style="left:806px;top:382px;width:59.5px;text-align:right;color:#000000"><span class="n">0.00</span></div>
<div class="t" style="left:870px;top:382px;width:50.5px;text-align:right;color:#000000"><span class="n">0.00</span></div>
<div class="t" style="left:7.843px;top:402px;transform:scaleX(1.1566);transform-origin:0 0">Exp: Other interest</div>
<div class="t" style="left:152px;top:402px;width:70.5px;text-align:right;color:#000000"><span class="b">0.00</span></div>
<div class="t" style="left:227px;top:402px;width:59.5px;text-align:right;color:#000000"><span class="n">0.00</span></div>
<div class="t" style="left:291px;top:402px;width:59.5px;text-align:right;color:#000000"><span class="n">0.00</span></div>
<div class="t" style="left:355px;top:402px;width:60.5px;text-align:right;color:#000000"><span class="n">0.00</span></div>
<div class="t" style="left:420px;top:402px;width:59.5px;text-align:right;color:#000000"><span class="n">0.00</span></div>
<div class="t" style="left:484px;top:402px;width:60.5px;text-align:right;color:#000000"><span class="n">0.00</span></div>
<div class="t" style="left:549px;top:402px;width:60.5px;text-align:right;color:#000000"><span class="n">0.00</span></div>
<div class="t" style="left:614px;top:402px;width:58.5px;text-align:right;color:#000000"><span class="n">0.00</span></div>
<div class="t" style="left:677px;top:402px;width:60.5px;text-align:right;color:#000000"><span class="n">0.00</span></div>
<div class="t" style="left:742px;top:402px;width:59.5px;text-align:right;color:#000000"><span class="n">0.00</span></div>
<div class="t" style="left:806px;top:402px;width:59.5px;text-align:right;color:#000000"><span class="n">0.00</span></div>
<div class="t" style="left:870px;top:402px;width:50.5px;text-align:right;color:#000000"><span class="n">0.00</span></div>
<div class="t" style="left:7.897px;top:423px;transform:scaleX(1.1029);transform-origin:0 0">Exp: Repairs</div>
<div class="t" style="left:152px;top:423px;width:70.5px;text-align:right;color:#0066cc"><span class="b">150.48</span></div>
<div class="t" style="left:227px;top:423px;width:59.5px;text-align:right;color:#000000"><span class="n">0.00</span></div>
<div class="t" style="left:291px;top:423px;width:59.5px;text-align:right;color:#000000"><span class="n">0.00</span></div>
<div class="t" style="left:355px;top:423px;width:60.5px;text-align:right;color:#000000"><span class="n">0.00</span></div>
<div class="t" style="left:420px;top:423px;width:59.5px;text-align:right;color:#0066cc"><span class="n">150.48</span></div>
<div class="t" style="left:484px;top:423px;width:60.5px;text-align:right;color:#000000"><span class="n">0.00</span></div>
<div class="t" style="left:549px;top:423px;width:60.5px;text-align:right;color:#000000"><span class="n">0.00</span></div>
<div class="t" style="left:614px;top:423px;width:58.5px;text-align:right;color:#000000"><span class="n">0.00</span></div>
<div class="t" style="left:677px;top:423px;width:60.5px;text-align:right;color:#000000"><span class="n">0.00</span></div>
<div class="t" style="left:742px;top:423px;width:59.5px;text-align:right;color:#000000"><span class="n">0.00</span></div>
<div class="t" style="left:806px;top:423px;width:59.5px;text-align:right;color:#000000"><span class="n">0.00</span></div>
<div class="t" style="left:870px;top:423px;width:50.5px;text-align:right;color:#000000"><span class="n">0.00</span></div>
<div class="t" style="left:7.876px;top:444px;transform:scaleX(1.1236);transform-origin:0 0">Exp: Supplies</div>
<div class="t" style="left:152px;top:444px;width:70.5px;text-align:right;color:#0066cc"><span class="b">100.19</span></div>
<div class="t" style="left:227px;top:444px;width:59.5px;text-align:right;color:#000000"><span class="n">0.00</span></div>
<div class="t" style="left:291px;top:444px;width:59.5px;text-align:right;color:#000000"><span class="n">0.00</span></div>
<div class="t" style="left:355px;top:444px;width:60.5px;text-align:right;color:#000000"><span class="n">0.00</span></div>
<div class="t" style="left:420px;top:444px;width:59.5px;text-align:right;color:#000000"><span class="n">0.00</span></div>
<div class="t" style="left:484px;top:444px;width:60.5px;text-align:right;color:#000000"><span class="n">0.00</span></div>
<div class="t" style="left:549px;top:444px;width:60.5px;text-align:right;color:#000000"><span class="n">0.00</span></div>
<div class="t" style="left:614px;top:444px;width:58.5px;text-align:right;color:#000000"><span class="n">0.00</span></div>
<div class="t" style="left:677px;top:444px;width:60.5px;text-align:right;color:#000000"><span class="n">0.00</span></div>
<div class="t" style="left:742px;top:444px;width:59.5px;text-align:right;color:#0066cc"><span class="n">80.19</span></div>
<div class="t" style="left:806px;top:444px;width:59.5px;text-align:right;color:#000000"><span class="n">0.00</span></div>
<div class="t" style="left:870px;top:444px;width:50.5px;text-align:right;color:#0066cc"><span class="n">20.00</span></div>
<div class="t" style="left:7.854px;top:464px;transform:scaleX(1.1456);transform-origin:0 0">Exp: Taxes</div>
<div class="t" style="left:152px;top:464px;width:70.5px;text-align:right;color:#0066cc"><span class="b">14.51</span></div>
<div class="t" style="left:227px;top:464px;width:59.5px;text-align:right;color:#000000"><span class="n">0.00</span></div>
<div class="t" style="left:291px;top:464px;width:59.5px;text-align:right;color:#000000"><span class="n">0.00</span></div>
<div class="t" style="left:355px;top:464px;width:60.5px;text-align:right;color:#000000"><span class="n">0.00</span></div>
<div class="t" style="left:420px;top:464px;width:59.5px;text-align:right;color:#000000"><span class="n">0.00</span></div>
<div class="t" style="left:484px;top:464px;width:60.5px;text-align:right;color:#000000"><span class="n">0.00</span></div>
<div class="t" style="left:549px;top:464px;width:60.5px;text-align:right;color:#000000"><span class="n">0.00</span></div>
<div class="t" style="left:614px;top:464px;width:58.5px;text-align:right;color:#000000"><span class="n">0.00</span></div>
<div class="t" style="left:677px;top:464px;width:60.5px;text-align:right;color:#0066cc"><span class="n">14.51</span></div>
<div class="t" style="left:742px;top:464px;width:59.5px;text-align:right;color:#000000"><span class="n">0.00</span></div>
<div class="t" style="left:806px;top:464px;width:59.5px;text-align:right;color:#000000"><span class="n">0.00</span></div>
<div class="t" style="left:870px;top:464px;width:50.5px;text-align:right;color:#000000"><span class="n">0.00</span></div>
<div class="t" style="left:7.846px;top:485px;transform:scaleX(1.1538);transform-origin:0 0">Exp: Utilities</div>
<div class="t" style="left:152px;top:485px;width:70.5px;text-align:right;color:#0066cc"><span class="b">32.30</span></div>
<div class="t" style="left:227px;top:485px;width:59.5px;text-align:right;color:#000000"><span class="n">0.00</span></div>
<div class="t" style="left:291px;top:485px;width:59.5px;text-align:right;color:#000000"><span class="n">0.00</span></div>
<div class="t" style="left:355px;top:485px;width:60.5px;text-align:right;color:#000000"><span class="n">0.00</span></div>
<div class="t" style="left:420px;top:485px;width:59.5px;text-align:right;color:#0066cc"><span class="n">32.30</span></div>
<div class="t" style="left:484px;top:485px;width:60.5px;text-align:right;color:#000000"><span class="n">0.00</span></div>
<div class="t" style="left:549px;top:485px;width:60.5px;text-align:right;color:#000000"><span class="n">0.00</span></div>
<div class="t" style="left:614px;top:485px;width:58.5px;text-align:right;color:#000000"><span class="n">0.00</span></div>
<div class="t" style="left:677px;top:485px;width:60.5px;text-align:right;color:#000000"><span class="n">0.00</span></div>
<div class="t" style="left:742px;top:485px;width:59.5px;text-align:right;color:#000000"><span class="n">0.00</span></div>
<div class="t" style="left:806px;top:485px;width:59.5px;text-align:right;color:#000000"><span class="n">0.00</span></div>
<div class="t" style="left:870px;top:485px;width:50.5px;text-align:right;color:#000000"><span class="n">0.00</span></div>
<div class="t" style="left:7.862px;top:506px;transform:scaleX(1.1376);transform-origin:0 0">Exp: Depreciation</div>
<div class="t" style="left:8.4px;top:520px;transform:scaleX(1.0733);transform-origin:0 0">expense</div>
<div class="t" style="left:152px;top:513px;width:70.5px;text-align:right;color:#000000"><span class="b">0.00</span></div>
<div class="t" style="left:227px;top:513px;width:59.5px;text-align:right;color:#000000"><span class="n">0.00</span></div>
<div class="t" style="left:291px;top:513px;width:59.5px;text-align:right;color:#000000"><span class="n">0.00</span></div>
<div class="t" style="left:355px;top:513px;width:60.5px;text-align:right;color:#000000"><span class="n">0.00</span></div>
<div class="t" style="left:420px;top:513px;width:59.5px;text-align:right;color:#000000"><span class="n">0.00</span></div>
<div class="t" style="left:484px;top:513px;width:60.5px;text-align:right;color:#000000"><span class="n">0.00</span></div>
<div class="t" style="left:549px;top:513px;width:60.5px;text-align:right;color:#000000"><span class="n">0.00</span></div>
<div class="t" style="left:614px;top:513px;width:58.5px;text-align:right;color:#000000"><span class="n">0.00</span></div>
<div class="t" style="left:677px;top:513px;width:60.5px;text-align:right;color:#000000"><span class="n">0.00</span></div>
<div class="t" style="left:742px;top:513px;width:59.5px;text-align:right;color:#000000"><span class="n">0.00</span></div>
<div class="t" style="left:806px;top:513px;width:59.5px;text-align:right;color:#000000"><span class="n">0.00</span></div>
<div class="t" style="left:870px;top:513px;width:50.5px;text-align:right;color:#000000"><span class="n">0.00</span></div>
<div class="t" style="left:7.816px;top:541px;transform:scaleX(1.1841);transform-origin:0 0">Exp: Other (list)</div>
<div class="t" style="left:152px;top:541px;width:70.5px;text-align:right;color:#0066cc"><span class="b">120.00</span></div>
<div class="t" style="left:227px;top:541px;width:59.5px;text-align:right;color:#000000"><span class="n">0.00</span></div>
<div class="t" style="left:291px;top:541px;width:59.5px;text-align:right;color:#000000"><span class="n">0.00</span></div>
<div class="t" style="left:355px;top:541px;width:60.5px;text-align:right;color:#000000"><span class="n">0.00</span></div>
<div class="t" style="left:420px;top:541px;width:59.5px;text-align:right;color:#0066cc"><span class="n">120.00</span></div>
<div class="t" style="left:484px;top:541px;width:60.5px;text-align:right;color:#000000"><span class="n">0.00</span></div>
<div class="t" style="left:549px;top:541px;width:60.5px;text-align:right;color:#000000"><span class="n">0.00</span></div>
<div class="t" style="left:614px;top:541px;width:58.5px;text-align:right;color:#000000"><span class="n">0.00</span></div>
<div class="t" style="left:677px;top:541px;width:60.5px;text-align:right;color:#000000"><span class="n">0.00</span></div>
<div class="t" style="left:742px;top:541px;width:59.5px;text-align:right;color:#000000"><span class="n">0.00</span></div>
<div class="t" style="left:806px;top:541px;width:59.5px;text-align:right;color:#000000"><span class="n">0.00</span></div>
<div class="t" style="left:870px;top:541px;width:50.5px;text-align:right;color:#000000"><span class="n">0.00</span></div>
<div class="t" style="left:7.7px;top:562px;transform:scaleX(1.1187);transform-origin:0 0">Total Expense</div>
<div class="t" style="left:152px;top:562px;width:70.5px;text-align:right;color:#000000"><span class="b">5,771.31</span></div>
<div class="t" style="left:227px;top:562px;width:59.5px;text-align:right;color:#000000"><span class="n">473.32</span></div>
<div class="t" style="left:291px;top:562px;width:59.5px;text-align:right;color:#000000"><span class="n">472.03</span></div>
<div class="t" style="left:355px;top:562px;width:60.5px;text-align:right;color:#000000"><span class="n">484.09</span></div>
<div class="t" style="left:420px;top:562px;width:59.5px;text-align:right;color:#000000"><span class="n">1,256.91</span></div>
<div class="t" style="left:484px;top:562px;width:60.5px;text-align:right;color:#000000"><span class="n">572.70</span></div>
<div class="t" style="left:549px;top:562px;width:60.5px;text-align:right;color:#000000"><span class="n">570.96</span></div>
<div class="t" style="left:614px;top:562px;width:58.5px;text-align:right;color:#000000"><span class="n">569.21</span></div>
<div class="t" style="left:677px;top:562px;width:60.5px;text-align:right;color:#000000"><span class="n">651.96</span></div>
<div class="t" style="left:742px;top:562px;width:59.5px;text-align:right;color:#000000"><span class="n">620.13</span></div>
<div class="t" style="left:806px;top:562px;width:59.5px;text-align:right;color:#000000"><span class="n">80.00</span></div>
<div class="t" style="left:870px;top:562px;width:50.5px;text-align:right;color:#000000"><span class="n">20.00</span></div>
<div class="t" style="left:7.858px;top:582px;transform:scaleX(1.1417);transform-origin:0 0">Net Income</div>
<div class="t" style="left:152px;top:582px;width:70.5px;text-align:right;color:#000000"><span class="b">10,178.69</span></div>
<div class="t" style="left:227px;top:582px;width:59.5px;text-align:right;color:#000000"><span class="n">1,086.68</span></div>
<div class="t" style="left:291px;top:582px;width:59.5px;text-align:right;color:#000000"><span class="n">1,087.97</span></div>
<div class="t" style="left:355px;top:582px;width:60.5px;text-align:right;color:#000000"><span class="n">1,075.91</span></div>
<div class="t" style="left:420px;top:582px;width:59.5px;text-align:right;color:#000000"><span class="n">353.09</span></div>
<div class="t" style="left:484px;top:582px;width:60.5px;text-align:right;color:#000000"><span class="n">1,037.30</span></div>
<div class="t" style="left:549px;top:582px;width:60.5px;text-align:right;color:#000000"><span class="n">1,039.04</span></div>
<div class="t" style="left:614px;top:582px;width:58.5px;text-align:right;color:#000000"><span class="n">1,040.79</span></div>
<div class="t" style="left:677px;top:582px;width:60.5px;text-align:right;color:#000000"><span class="n">958.04</span></div>
<div class="t" style="left:742px;top:582px;width:59.5px;text-align:right;color:#000000"><span class="n">989.87</span></div>
<div class="t" style="left:806px;top:582px;width:59.5px;text-align:right;color:#000000"><span class="n">1,530.00</span></div>
<div class="t" style="left:870px;top:582px;width:50.5px;text-align:right;color:#000000"><span class="n">-20.00</span></div>
</body></html>
